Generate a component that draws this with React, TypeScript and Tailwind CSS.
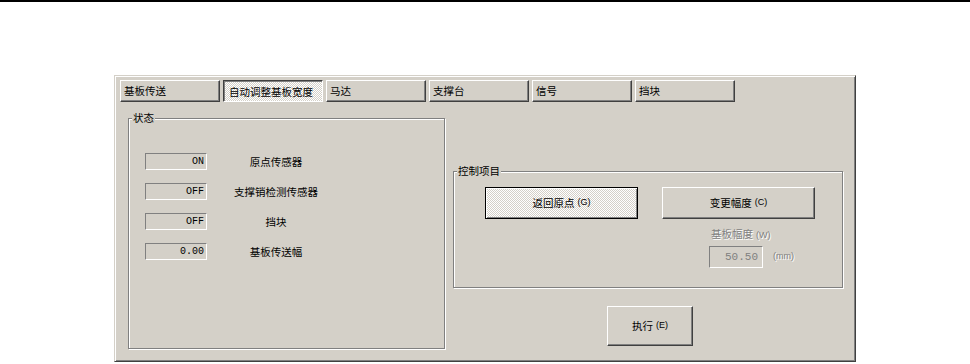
import type { ReactNode } from 'react';

const tabs = ['基板传送', '自动调整基板宽度', '马达', '支撑台', '信号', '挡块'];
const activeTab = 1;

const statusRows = [
  { value: 'ON', label: '原点传感器' },
  { value: 'OFF', label: '支撑销检测传感器' },
  { value: 'OFF', label: '挡块' },
  { value: '0.00', label: '基板传送幅' },
];

const raised =
  'border border-t-white border-l-white border-r-[#404040] border-b-[#404040] shadow-[inset_-1px_-1px_0_#808080]';
const checker = 'bg-[image:repeating-conic-gradient(#ffffff_0%_25%,#d4d0c8_0%_50%)] bg-[length:2px_2px]';

function Group({ title, className, children }: { title: string; className: string; children: ReactNode }) {
  return (
    <fieldset
      className={`border border-[#808080] shadow-[1px_1px_0_#ffffff,inset_1px_1px_0_#ffffff] ${className}`}
    >
      <legend className="ml-[3px] px-[1px] bg-[#d4d0c8] leading-[12px]">{title}</legend>
      {children}
    </fieldset>
  );
}

function Key({ k }: { k: string }) {
  return <span className="ml-[3px] text-[9px] font-['Liberation_Sans',sans-serif] align-middle">({k})</span>;
}

export default function App() {
  return (
    <div className="w-[970px] h-[364px] bg-white overflow-hidden text-[10.5px] text-black font-['Noto_Sans_CJK_SC','Noto_Sans',sans-serif]">
      <div className="h-[2px] bg-black" />
      <div className="ml-[114px] mt-[73px] w-[742px] h-[287px] bg-[#d4d0c8] border border-t-[#d4d0c8] border-l-[#d4d0c8] border-r-[#404040] border-b-[#404040] shadow-[inset_1px_1px_0_#ffffff,inset_-1px_-1px_0_#808080] pt-[4px] px-[5px]">
        {/* tab strip */}
        <div className="flex gap-[3px] h-[22px]">
          {tabs.map((t, i) =>
            i === activeTab ? (
              <div
                key={t}
                className={`w-[100px] h-[22px] border border-t-[#404040] border-l-[#404040] border-r-white border-b-white shadow-[inset_1px_1px_0_#808080] ${checker} pl-[5px] pt-[4px] leading-[14px] whitespace-nowrap`}
              >
                {t}
              </div>
            ) : (
              <div key={t} className={`w-[100px] h-[22px] bg-[#d4d0c8] ${raised} pl-[3px] pt-[2px] leading-[16px]`}>
                {t}
              </div>
            ),
          )}
        </div>

        <div className="flex mt-[10px]">
          {/* status group */}
          <Group title="状态" className="ml-[8px] w-[317px] h-[237px]">
            <div className="flex flex-col gap-[13px] mt-[29px] pl-[16px]">
              {statusRows.map((r) => (
                <div key={r.label} className="flex items-center">
                  <div className="w-[62px] h-[17px] border border-t-[#808080] border-l-[#808080] border-r-white border-b-white text-right pr-[2px] text-[10px] leading-[15px] font-['Liberation_Mono',monospace]">
                    {r.value}
                  </div>
                  <div className="ml-[7px] w-[124px] text-center leading-[14px]">{r.label}</div>
                </div>
              ))}
            </div>
          </Group>

          {/* control side */}
          <div className="ml-[8px] w-[390px] flex flex-col">
            <Group title="控制项目" className="mt-[53px] h-[123px]">
              <div className="flex gap-[24px] mt-[10px] pl-[31px]">
                <button
                  className={`w-[153px] h-[32px] border border-black shadow-[inset_1px_1px_0_#ffffff,inset_-1px_-1px_0_#808080] ${checker} flex items-center justify-center`}
                >
                  返回原点
                  <Key k="G" />
                </button>
                <div className="flex flex-col">
                  <button className={`w-[153px] h-[32px] bg-[#d4d0c8] ${raised} flex items-center justify-center`}>
                    变更幅度
                    <Key k="C" />
                  </button>
                  <div className="ml-[49px] mt-[8px] leading-[14px] text-[#808080] [text-shadow:1px_1px_0_#ffffff]">
                    基板幅度<Key k="W" />
                  </div>
                  <div className="flex items-center mt-[4px] ml-[47px]">
                    <div className="w-[54px] h-[22px] border border-t-[#808080] border-l-[#808080] border-r-white border-b-white text-right pr-[4px] text-[11px] leading-[20px] text-[#808080] font-['Liberation_Mono',monospace]">
                      50.50
                    </div>
                    <span className="ml-[10px] text-[9px] text-[#808080] font-['Liberation_Sans',sans-serif] [text-shadow:1px_1px_0_#ffffff]">
                      (mm)
                    </span>
                  </div>
                </div>
              </div>
            </Group>

            <button className={`ml-[154px] mt-[18px] w-[86px] h-[40px] bg-[#d4d0c8] ${raised} flex items-center justify-center`}>
              执行
              <Key k="E" />
            </button>
          </div>
        </div>
      </div>
    </div>
  );
}
